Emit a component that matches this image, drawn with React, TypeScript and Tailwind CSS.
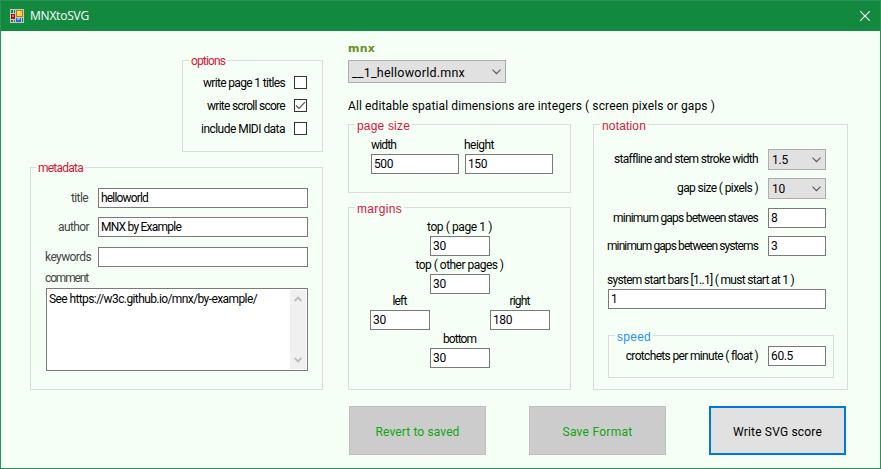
import { useLayoutEffect, useRef, useState, type ReactNode } from "react";

/** Text whose tracking is adjusted so that it fills the given width. */
function Fit({ text, w, className = "" }: { text: string; w: number; className?: string }) {
  const ref = useRef<HTMLSpanElement>(null);
  const [spacing, setSpacing] = useState(0);
  useLayoutEffect(() => {
    const el = ref.current;
    if (!el || text.length < 2) return;
    el.style.letterSpacing = "0px";
    const natural = el.getBoundingClientRect().width;
    const next = (w - natural) / text.length;
    el.style.letterSpacing = `${next}px`;
    setSpacing(next);
  }, [text, w]);
  return (
    <span ref={ref} className={`inline-block shrink-0 whitespace-pre ${className}`} style={{ letterSpacing: `${spacing}px` }}>
      {text}
    </span>
  );
}

function Group({ title, w, className, legend, children }: { title: string; w: number; className: string; legend: string; children: ReactNode }) {
  return (
    <section className={`relative shrink-0 border border-[#dcdcdc] ${className}`}>
      <h2 className={`absolute flex bg-[#f5fff5] pr-0.5 pl-0.5 leading-4 ${legend}`}>
        <Fit text={title} w={w} />
      </h2>
      {children}
    </section>
  );
}

function Field({ text, w, className }: { text: string; w: number; className: string }) {
  return (
    <div className={`h-5 shrink-0 border border-[#7a7a7a] bg-white pl-0.5 leading-[18px] text-black ${className}`}>
      <Fit text={text} w={w} />
    </div>
  );
}

function Chevron({ className = "" }: { className?: string }) {
  return (
    <svg viewBox="0 0 9 6" className={`h-1.5 w-[9px] shrink-0 ${className}`} fill="none" stroke="#555" strokeWidth="1.1">
      <path d="M0.5 0.7 4.5 4.7 8.5 0.7" />
    </svg>
  );
}

function Combo({ text, w }: { text: string; w: number }) {
  return (
    <div className="flex h-[21px] w-[58px] shrink-0 items-center justify-between border border-[#adadad] bg-[#e1e1e1] pr-1 pl-[3px] leading-[18px]">
      <Fit text={text} w={w} className="pt-px" />
      <Chevron className="mt-px" />
    </div>
  );
}

function Check({ text, w, on }: { text: string; w: number; on?: boolean }) {
  return (
    <div className="flex h-[17px] items-center justify-end gap-[9px] leading-4">
      <Fit text={text} w={w} className="pt-px" />
      <span className="flex h-[13px] w-[13px] items-center justify-center border border-[#333] bg-white">
        {on && (
          <svg viewBox="0 0 11 11" className="h-[11px] w-[11px]" fill="none" stroke="#555" strokeWidth="1.2">
            <path d="M1 5.5 4 8.5 10 2.2" />
          </svg>
        )}
      </span>
    </div>
  );
}

function Margin({ label, w, value, vw, className = "" }: { label: string; w: number; value: string; vw: number; className?: string }) {
  return (
    <div className={`flex w-[60px] shrink-0 flex-col items-center ${className}`}>
      <Fit text={label} w={w} className="-ml-px leading-4" />
      <Field text={value} w={vw} className="mt-px w-[60px]" />
    </div>
  );
}

function PushButton({ text, w, className }: { text: string; w: number; className: string }) {
  return (
    <button className={`flex h-[49px] w-[137px] items-center justify-center text-[12px] ${className}`}>
      <Fit text={text} w={w} className="pt-0.5" />
    </button>
  );
}

export default function App() {
  return (
    <div className="flex h-[469px] w-[881px] flex-col overflow-hidden border border-[#2a9158] bg-[#f5fff5] font-[Roboto,'Liberation_Sans',sans-serif] text-[12px] text-black">
      <header className="flex h-[30px] shrink-0 items-center bg-[#12893f] pr-[10px] pl-[9px] text-white">
        <svg viewBox="0 0 14 14" className="h-3.5 w-3.5" shapeRendering="crispEdges">
          <rect width="14" height="14" fill="#c5c8c5" />
          <rect x="1" y="1" width="4" height="3" fill="#12893f" />
          <rect x="1" y="11" width="4" height="2" fill="#12893f" />
          <rect x="12" y="9" width="1" height="4" fill="#12893f" />
          <rect x="3" y="1" width="1" height="3" fill="#c5c8c5" />
          <rect x="3" y="11" width="1" height="2" fill="#c5c8c5" />
          <rect x="1" y="5" width="4" height="5" fill="#a5120e" />
          <rect x="2" y="6" width="2" height="2" fill="#e86a60" />
          <rect x="6" y="1" width="7" height="7" fill="#b97b08" />
          <rect x="7" y="2" width="5" height="5" fill="#ffd042" />
          <rect x="7" y="2" width="3" height="2" fill="#ffe58c" />
          <rect x="6" y="9" width="5" height="4" fill="#2866d0" />
          <rect x="7" y="9" width="3" height="2" fill="#86b4f4" />
        </svg>
        <Fit text="MNXtoSVG" w={59} className="ml-1.5 font-['Open_Sans',sans-serif] text-[12px] leading-[30px]" />
        <svg viewBox="0 0 10 10" className="ml-auto h-2.5 w-2.5" fill="none" stroke="white" strokeWidth="1.1">
          <path d="M0.3 0.3 9.7 9.7M9.7 0.3 0.3 9.7" />
        </svg>
      </header>

      <main className="flex pl-[29px]">
        <div className="flex w-[293px] shrink-0 flex-col items-end pt-[29px]">
          <Group title="options" w={34} legend="left-[6px] top-[-8px] text-[#dc143c]" className="h-[92px] w-[141px]">
            <div className="flex flex-col gap-1.5 pt-[13px] pr-[15px]">
              <Check text="write page 1 titles" w={82} />
              <Check text="write scroll score" w={78} on />
              <Check text="include MIDI data" w={84} />
            </div>
          </Group>

          <Group title="metadata" w={45} legend="left-[5px] top-[-8px] text-[#dc143c]" className="mt-[15px] h-[223px] w-[293px]">
            <div className="pt-5 pr-[14px] pl-[15px] text-[#444]">
              <div className="flex justify-end leading-5">
                <Fit text="title" w={17} className="mr-[10px]" />
                <Field text="helloworld" w={47} className="w-[210px]" />
              </div>
              <div className="mt-[9px] flex justify-end leading-5">
                <Fit text="author" w={31} className="mr-[9px]" />
                <Field text="MNX by Example" w={80} className="w-[210px]" />
              </div>
              <div className="mt-2.5 flex justify-end leading-5">
                <Fit text="keywords" w={46} className="mr-[7px]" />
                <Field text="" w={0} className="w-[210px]" />
              </div>
              <div className="mt-[3px] flex h-4 leading-4">
                <Fit text="comment" w={43} className="-ml-px" />
              </div>
              <div className="mt-0.5 flex h-[83px] justify-between border border-[#7a7a7a] bg-white py-px pr-px pl-0.5 leading-[18px] text-black">
                <Fit text="See https://w3c.github.io/mnx/by-example/" w={208} />
                <div className="flex w-4 flex-col items-center justify-between bg-[#f0f0f0] py-1.5">
                  <svg viewBox="0 0 8 6" className="h-1.5 w-2" fill="none" stroke="#bcbcbc" strokeWidth="1.9">
                    <path d="M0.6 5 4 1.5 7.4 5" />
                  </svg>
                  <svg viewBox="0 0 8 6" className="h-1.5 w-2" fill="none" stroke="#bcbcbc" strokeWidth="1.9">
                    <path d="M0.6 1 4 4.5 7.4 1" />
                  </svg>
                </div>
              </div>
            </div>
          </Group>
        </div>

        <div className="ml-[25px] w-[500px] shrink-0 pt-2.5">
          <div className="flex h-[19px] leading-4">
            <Fit text="mnx" w={27} className="font-['DejaVu_Sans',sans-serif] text-[11px] font-bold text-[#6b8e23]" />
          </div>
          <div className="flex h-[23px] w-[158px] items-center justify-between border border-[#adadad] bg-[#e1e1e1] pr-1 pl-[3px] text-[12.5px] leading-[21px]">
            <Fit text="__1_helloworld.mnx" w={113} className="pt-0.5" />
            <Chevron className="mt-px" />
          </div>
          <div className="mt-[15px] h-[26px] leading-4">
            <Fit text="All editable spatial dimensions are integers ( screen pixels or gaps )" w={367} className="text-[12px]" />
          </div>

          <div className="flex justify-between">
            <div className="flex flex-col gap-[14px]">
              <Group title="page size" w={53} legend="left-[6px] top-[-7px] font-['Liberation_Sans',sans-serif] text-[12px] text-[#dc143c]" className="h-[69px] w-[223px]">
                <div className="flex gap-[6px] pt-3 pl-[22px]">
                  <div className="flex w-[88px] flex-col items-start">
                    <Fit text="width" w={25} className="leading-4" />
                    <Field text="500" w={19} className="mt-px w-[88px]" />
                  </div>
                  <div className="flex w-[88px] flex-col items-start">
                    <Fit text="height" w={30} className="-ml-px leading-4" />
                    <Field text="150" w={19} className="mt-px w-[88px]" />
                  </div>
                </div>
              </Group>
              <Group title="margins" w={45} legend="left-[6px] top-[-7px] font-['Liberation_Sans',sans-serif] text-[12px] text-[#dc143c]" className="h-[183px] w-[223px]">
                <div className="flex flex-col pt-[11px] pl-[21px]">
                  <Margin label="top ( page 1 )" w={65} value="30" vw={13} className="ml-[60px]" />
                  <Margin label="top ( other pages )" w={88} value="30" vw={13} className="mt-px ml-[60px]" />
                  <div className="-mt-px flex gap-[60px]">
                    <Margin label="left" w={14} value="30" vw={13} />
                    <Margin label="right" w={20} value="180" vw={19} />
                  </div>
                  <Margin label="bottom" w={33} value="30" vw={13} className="mt-px ml-[60px]" />
                </div>
              </Group>
            </div>

            <Group title="notation" w={44} legend="left-[6px] top-[-7px] font-['Liberation_Sans',sans-serif] text-[12px] text-[#dc143c]" className="h-[266px] w-[255px]">
              <div className="pt-6 pr-[21px] pl-[14px]">
                <div className="flex justify-end gap-2.5 leading-[21px]">
                  <Fit text="staffline and stem stroke width" w={143} />
                  <Combo text="1.5" w={16} />
                </div>
                <div className="mt-2 flex justify-end gap-[10px] leading-[21px]">
                  <Fit text="gap size ( pixels )" w={81} />
                  <Combo text="10" w={13} />
                </div>
                <div className="mt-[9px] flex justify-end gap-2.5 leading-5">
                  <Fit text="minimum gaps between staves" w={145} />
                  <Field text="8" w={7} className="w-[58px]" />
                </div>
                <div className="mt-2 flex justify-end gap-2.5 leading-5">
                  <Fit text="minimum gaps between systems" w={151} />
                  <Field text="3" w={7} className="w-[58px]" />
                </div>
                <div className="mt-4 flex h-[17px] leading-4">
                  <Fit text="system start bars [1..1] ( must start at 1 )" w={187} className="-ml-px" />
                </div>
                <Field text="1" w={6} className="w-[218px]" />
                <Group title="speed" w={34} legend="left-[6px] top-[-7px] font-['Liberation_Sans',sans-serif] text-[12px] text-[#1e90ff]" className="mt-[26px] h-[43px] w-[226px]">
                  <div className="flex justify-end gap-[10px] pt-2.5 pr-[7px] leading-5">
                    <Fit text="crotchets per minute ( float )" w={132} />
                    <Field text="60.5" w={22} className="w-[58px]" />
                  </div>
                </Group>
              </div>
            </Group>
          </div>

          <div className="mt-4 ml-px flex gap-[43px]">
            <PushButton text="Revert to saved" w={84} className="border border-[#bfbfbf] bg-[#cccccc] text-[#0fa50f]" />
            <PushButton text="Save Format" w={70} className="border border-[#bfbfbf] bg-[#cccccc] text-[#0fa50f]" />
            <PushButton text="Write SVG score" w={89} className="border-2 border-[#0078d7] bg-[#e1e1e1] text-black" />
          </div>
        </div>
      </main>
    </div>
  );
}
